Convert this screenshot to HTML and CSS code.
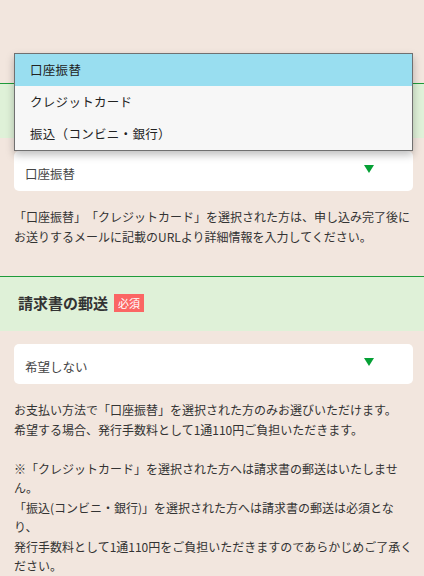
FILE: index.html
```html
<!DOCTYPE html>
<html lang="ja">
<head>
  <meta charset="UTF-8" />
  <meta name="viewport" content="width=device-width, initial-scale=1.0" />
  <title>お申し込みフォーム</title>
  <link rel="stylesheet" href="styles.css">
</head>
<body>
  <main class="form">
    <!-- お支払い方法 -->
    <section class="field first">
      <div class="field-head">
        <h2>お支払い方法</h2>
        <span class="required">必須</span>
      </div>
      <div class="select-wrap">
        <div class="select">
          <span>口座振替</span>
          <i class="arrow"></i>
        </div>
        <ul class="dropdown">
          <li class="selected">口座振替</li>
          <li>クレジットカード</li>
          <li>振込（コンビニ・銀行）</li>
        </ul>
      </div>
      <p class="note">「口座振替」「クレジットカード」を選択された方は、申し込み完了後にお送りするメールに記載のURLより詳細情報を入力してください。</p>
    </section>

    <!-- 請求書の郵送 -->
    <section class="field">
      <div class="field-head">
        <h2>請求書の郵送</h2>
        <span class="required">必須</span>
      </div>
      <div class="select-wrap">
        <div class="select">
          <span>希望しない</span>
          <i class="arrow"></i>
        </div>
      </div>
      <p class="note">お支払い方法で「口座振替」を選択された方のみお選びいただけます。<br>希望する場合、発行手数料として1通110円ご負担いただきます。<br><br>※「クレジットカード」を選択された方へは請求書の郵送はいたしません。<br>「振込(コンビニ・銀行)」を選択された方へは請求書の郵送は必須となり、<br>発行手数料として1通110円をご負担いただきますのであらかじめご了承ください。</p>
    </section>
  </main>
</body>
</html>
```

FILE: styles.css
```css
body {
  font-family: "Noto Sans CJK JP", "Noto Sans", sans-serif;
  margin: 0;
  background-color: #f2e6de;
  color: #333;
  text-spacing-trim: space-all;
}

.form {
  padding-top: 83px;
}

.field {
  margin-bottom: 30px;
}

.field-head {
  display: flex;
  align-items: center;
  gap: 6px;
  height: 54px;
  padding-left: 18px;
  background-color: #dff1d8;
  border-top: 1px solid #1f9b3a;
}

.field-head h2 {
  margin: 0;
  margin-top: -3px;
  font-size: 15px;
  font-weight: bold;
  color: #333;
}

.required {
  background-color: #fb6664;
  color: #fff;
  font-size: 11px;
  line-height: 18px;
  padding: 0 4px;
  margin-top: -2px;
}

.select-wrap {
  position: relative;
  margin: 13px 11px 0 14px;
}

.select {
  display: flex;
  align-items: center;
  justify-content: space-between;
  height: 40px;
  padding: 4px 39px 0 11px;
  box-sizing: border-box;
  background-color: #fff;
  border-radius: 5px;
  font-size: 12.5px;
  color: #444;
}

.arrow {
  width: 0;
  height: 0;
  border-left: 5px solid transparent;
  border-right: 5px solid transparent;
  border-top: 8px solid #05a035;
  margin-top: -8px;
}

.dropdown {
  position: absolute;
  top: -98px;
  left: 0;
  right: 0;
  margin: 0;
  padding: 0;
  list-style: none;
  background-color: #f7f7f7;
  border: 1px solid #707070;
  box-shadow: 0 4px 8px rgba(0, 0, 0, 0.25);
}

.dropdown li {
  height: 32px;
  line-height: 32px;
  padding-left: 15px;
  font-size: 12.5px;
  color: #222;
  letter-spacing: 0.3px;
}

.dropdown li.selected {
  background-color: #99def0;
}

.note {
  margin: 16px 10px 0 14px;
  font-size: 12px;
  line-height: 19.5px;
  color: #333;
}
```
